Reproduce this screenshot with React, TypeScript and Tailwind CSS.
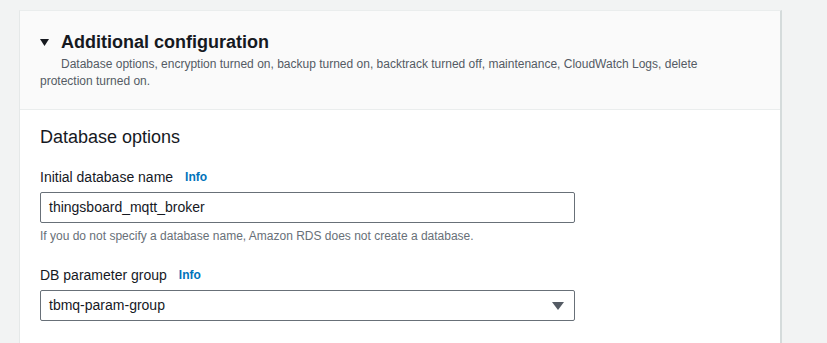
export default function App() {
  return (
    <div className="w-[827px] h-[343px] overflow-hidden bg-[#f2f3f3] pl-[19px] pt-[10px] font-['Liberation_Sans',Arial,sans-serif] text-[#16191f]">
      <div className="w-[763px] h-[400px] bg-white border-l border-[#e5e8e8] border-t border-t-[#eaeded] border-r-2 border-r-[#d5dbdb]">
        <div className="bg-[#fafafa] border-b border-[#eaeded] px-[20px] pt-[20px] pb-[19px]">
          <div className="flex items-center h-[22px]">
            <svg width="9" height="7" viewBox="0 0 9 7" className="mr-[12px]">
              <polygon points="0,0 9,0 4.5,7" fill="#16191f" />
            </svg>
            <h2 className="text-[18px] leading-[22px] font-bold">Additional configuration</h2>
          </div>
          <p className="mt-[3px] w-[700px] text-[12px] leading-[17px] text-[#545b64] indent-[21px]">
            Database options, encryption turned on, backup turned on, backtrack turned off, maintenance, CloudWatch Logs, delete protection turned on.
          </p>
        </div>
        <div className="px-[20px] pt-[16px]">
          <h3 className="text-[18px] leading-[22px]">Database options</h3>
          <div className="mt-[19px] flex items-center gap-[12px] h-[20px]">
            <span className="text-[14px]">Initial database name</span>
            <span className="text-[12px] font-bold text-[#0073bb]">Info</span>
          </div>
          <div className="mt-[5px] w-[535px] h-[31px] border border-[#687078] rounded-[2px] flex items-center px-[8px] text-[14px]">
            thingsboard_mqtt_broker
          </div>
          <p className="mt-[5px] text-[12px] leading-[16px] text-[#687078]">
            If you do not specify a database name, Amazon RDS does not create a database.
          </p>
          <div className="mt-[21px] flex items-center gap-[12px] h-[20px]">
            <span className="text-[14px]">DB parameter group</span>
            <span className="text-[12px] font-bold text-[#0073bb]">Info</span>
          </div>
          <div className="mt-[5px] w-[535px] h-[31px] border border-[#687078] rounded-[2px] flex items-center justify-between pl-[8px] pr-[10px] text-[14px]">
            <span>tbmq-param-group</span>
            <svg width="12" height="8" viewBox="0 0 12 8">
              <polygon points="0,0 12,0 6,8" fill="#545b64" />
            </svg>
          </div>
        </div>
      </div>
    </div>
  );
}
